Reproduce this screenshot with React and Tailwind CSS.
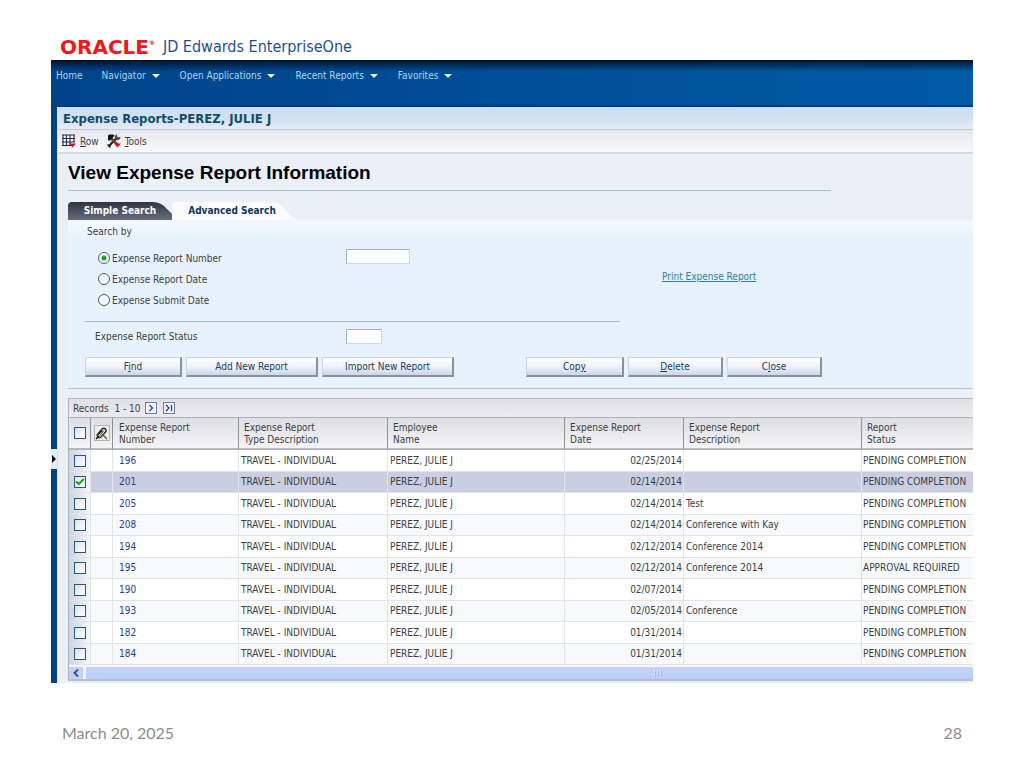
import React, { useState } from "react";
import { Check } from "lucide-react";

const MENUS = ["Navigator", "Open Applications", "Recent Reports", "Favorites"];

const REPORTS = [
  { id: 196, date: "02/25/2014", description: "", status: "PENDING COMPLETION" },
  { id: 201, date: "02/14/2014", description: "", status: "PENDING COMPLETION" },
  { id: 205, date: "02/14/2014", description: "Test", status: "PENDING COMPLETION" },
  { id: 208, date: "02/14/2014", description: "Conference with Kay", status: "PENDING COMPLETION" },
  { id: 194, date: "02/12/2014", description: "Conference 2014", status: "PENDING COMPLETION" },
  { id: 195, date: "02/12/2014", description: "Conference 2014", status: "APPROVAL REQUIRED" },
  { id: 190, date: "02/07/2014", description: "", status: "PENDING COMPLETION" },
  { id: 193, date: "02/05/2014", description: "Conference", status: "PENDING COMPLETION" },
  { id: 182, date: "01/31/2014", description: "", status: "PENDING COMPLETION" },
  { id: 184, date: "01/31/2014", description: "", status: "PENDING COMPLETION" },
];

const SEARCH_FIELDS = ["Expense Report Number", "Expense Report Date", "Expense Submit Date"];

// ─── Icons ───────────────────────────────────────────────────────
function Caret() {
  return (
    <svg width="8" height="4" viewBox="0 0 8 4" className="shrink-0">
      <path d="M0 0h8L4 4z" fill="#e2f4ff" />
    </svg>
  );
}

function RowIcon() {
  return (
    <svg width="14" height="14" viewBox="0 0 14 14">
      <rect x="1" y="1" width="11" height="10" fill="#f2f3fb" />
      <path d="M0 1h13M0 4.500h13M0 8h13M0 11.500h9M1 0.500v11.500M4.500 0.500v11.500M8 0.500v11.500M12 0.500v8" stroke="#2a2a48" strokeWidth="1.100" />
      <path d="M7 9.500h7L10.500 13.500z" fill="#e00f1c" />
    </svg>
  );
}

function ToolsIcon() {
  return (
    <svg width="14" height="14" viewBox="0 0 14 14">
      <path d="M10.500 3L2 12" stroke="#1a1a1a" strokeWidth="2" />
      <path d="M8 2l2-2v2.500l1.500 1 2-1-.5 2.500-3 1.500L8 5z" fill="#454d52" />
      <path d="M3.500 4l8 7.500" stroke="#7a3f22" strokeWidth="2.400" />
      <path d="M1 6V1.500L2.500 0.500H6L8 2 6 3 5.500 5 3.500 5.500 2 7z" fill="#15151c" />
      <path d="M0.500 10.500l3 3" stroke="#111" strokeWidth="1.500" />
      <path d="M7 9.500h7L10.500 13.500z" fill="#e00f1c" />
    </svg>
  );
}

function AttachIcon() {
  return (
    <svg width="13" height="13" viewBox="0 0 13 13" fill="none">
      <path d="M2 8l5-6q2-1.500 3.500 0t0 3L5.500 10.500q-2 1-3-1t.5-2L7.500 3.500" stroke="#222" strokeWidth="1.300" />
      <path d="M4.500 9L9 3.500" stroke="#555" />
      <path d="M1 12l3-3" stroke="#111" strokeWidth="1.500" />
      <path d="M7.500 7.500l4.500 4.500" stroke="#6b6532" strokeWidth="1.500" />
    </svg>
  );
}

// ─── Controls ────────────────────────────────────────────────────
function Tick({ label, checked, onChange }) {
  return (
    <span className="relative mx-auto block h-3 w-3">
      <input type="checkbox" aria-label={label} checked={checked} onChange={onChange}
        className="peer block h-3 w-3 appearance-none border border-[#25588a] bg-linear-to-br from-[#dfe4e4] to-white" />
      <Check size={10} strokeWidth={5}
        className="pointer-events-none absolute top-px left-px hidden text-[#21a121] peer-checked:block" />
    </span>
  );
}

function ActionButton({ className, children }) {
  return (
    <button className={`h-5 border-t border-l border-r-2 border-b-2 border-t-[#cbd4e1] border-l-[#cbd4e1] border-r-[#8791a0] border-b-[#8791a0] bg-linear-to-b from-white via-[#f0f3fb] to-[#cbd5e9] text-center leading-4 text-[#18405f] ${className}`}>
      {children}
    </button>
  );
}

function HeadCell({ top, bottom, className }) {
  return (
    <th className={`border-t border-b-2 border-t-[#b0b4ba] border-r-[#8d9095] border-b-[#b4b7bb] text-left align-top font-normal leading-3 ${className}`}>
      <span className="block pt-1">{top}</span>
      <span className="block">{bottom}</span>
    </th>
  );
}

export default function App() {
  const [searchBy, setSearchBy] = useState(SEARCH_FIELDS[0]);
  const [selected, setSelected] = useState([201]);

  const toggle = (id) =>
    setSelected((ids) => (ids.includes(id) ? ids.filter((x) => x !== id) : [...ids, id]));
  const allSelected = selected.length === REPORTS.length;

  return (
    <div className="bg-white px-[51px] font-['DejaVu_Sans_Condensed','DejaVu_Sans',sans-serif] text-[10px] text-[#3b3f45]">
      {/* brand */}
      <header className="flex h-[60px] items-end gap-2 pb-0.5 pl-[9px]">
        <span className="flex items-start font-['DejaVu_Sans',sans-serif] text-[20px] leading-[22px] font-bold text-[#f01818]">
          ORACLE<span className="pt-1 text-[6px] leading-[6px]">®</span>
        </span>
        <span className="text-[16px] leading-[22px] text-[#1f4f8c]">JD Edwards EnterpriseOne</span>
      </header>

      {/* menu bar */}
      <nav className="h-[47px] border-b-2 border-[#063a76] bg-linear-to-r from-[#00438a] to-[#005aa5]">
        <div className="flex h-full items-start gap-5 bg-linear-to-b from-[#001228] to-transparent to-25% pt-2.5 pl-[5px] leading-3 text-[#a5d8f5]">
          <a href="#home" className="-mr-px">Home</a>
          {MENUS.map((m) => (
            <button key={m} className="flex items-center gap-1.5">
              {m}
              <Caret />
            </button>
          ))}
        </div>
      </nav>

      <div className="flex">
        <div className="flex w-1.5 shrink-0 flex-col bg-[#00437f]">
          <button aria-label="Expand menu" className="mt-[342px] flex h-5 items-center justify-center bg-[#e3ebf5]">
            <svg width="4" height="8" viewBox="0 0 4 8"><path d="M0 0l4 4-4 4z" fill="#111" /></svg>
          </button>
        </div>

        <main className="min-w-0 flex-1 border-l border-[#cfe3f5] bg-[#eaf0f6] pb-0.5">
          <div className="h-[23px] border-b border-[#c3cbd3] bg-linear-to-b from-[#cbdff6] via-[#cfe2f4] to-[#e6ebf4] pl-[5px] text-[13px] leading-[24px] font-bold text-[#164b66]">
            Expense Reports-PEREZ, JULIE J
          </div>
          <div className="flex h-6 items-center gap-2 border-b-2 border-[#d5dade] bg-linear-to-b from-[#e6e7ee] to-[#fafafb] pl-1">
            <button className="flex items-center gap-1"><RowIcon /><span><u>R</u>ow</span></button>
            <button className="flex items-center gap-1"><ToolsIcon /><span><u>T</u>ools</span></button>
          </div>

          <div className="pl-2.5">
            <h1 className="mr-[142px] h-[37px] border-b border-[#a9bfc9] pt-2 font-['Liberation_Sans',sans-serif] text-[19px] leading-[22px] font-bold text-black">
              View Expense Report Information
            </h1>

            {/* tabs */}
            <div className="mt-[11px] flex h-[18px] text-[10px] leading-[18px] font-bold">
              <button className="relative w-[104px] text-white">
                <svg className="absolute inset-0 h-full w-full" viewBox="0 0 104 18" preserveAspectRatio="none">
                  <defs>
                    <linearGradient id="tab" x2="0" y2="1">
                      <stop offset="0" stopColor="#2d3543" />
                      <stop offset="1" stopColor="#666d7d" />
                    </linearGradient>
                  </defs>
                  <path d="M0 18V4Q0 0 4 0H84Q91 0 96 4L104 12V18z" fill="url(#tab)" />
                </svg>
                <span className="relative">Simple Search</span>
              </button>
              <button className="relative w-[124px] pr-1 text-[#11355b]">
                <svg className="absolute inset-0 h-full w-full" viewBox="0 0 124 18" preserveAspectRatio="none">
                  <path d="M0 18V4Q0 0 4 0H98Q106 0 112 6Q119 15 124 18z" fill="#fafcff" />
                </svg>
                <span className="relative">Advanced Search</span>
              </button>
            </div>

            {/* search panel */}
            <section className="border-b border-[#b8c4d0] bg-linear-to-b from-[#f4f9ff] to-[#e7f2fc] to-12% pb-[11px] pl-[17px]">
              <div className="flex items-start">
                <fieldset className="w-[261px] pt-1.5">
                  <legend className="float-left w-full pb-3.5 pl-0.5 leading-3">Search by</legend>
                  <div className="clear-both space-y-[9px] pl-[13px]">
                    {SEARCH_FIELDS.map((f) => (
                      <label key={f} className="flex h-3 items-center gap-0.5">
                        <input type="radio" name="searchBy" checked={searchBy === f} onChange={() => setSearchBy(f)}
                          className="h-3 w-3 appearance-none rounded-full border border-[#456078] bg-[#f6fafc] checked:bg-[radial-gradient(circle,#1e9e28_0_2px,#f6fafc_3px)]" />
                        {f}
                      </label>
                    ))}
                  </div>
                </fieldset>
                <input type="text" aria-label={searchBy}
                  className="mt-[29px] h-[15px] w-16 border border-t-[#a3b1be] border-r-[#ccd8e2] border-b-[#ccd8e2] border-l-[#a3b1be] bg-white" />
                <a href="#print" className="mt-[51px] ml-[252px] leading-3 text-[#2f7ea6] underline">Print Expense Report</a>
              </div>

              <div className="mt-[15px] w-[535px] border-t border-[#a9bccb]" />

              <div className="mt-[7px] flex h-[15px] items-center pl-2.5">
                <label htmlFor="status" className="w-[251px] leading-3">Expense Report Status</label>
                <input id="status" type="text"
                  className="h-[15px] w-9 border border-t-[#a3b1be] border-r-[#ccd8e2] border-b-[#ccd8e2] border-l-[#a3b1be] bg-white" />
              </div>

              <div className="mt-[13px] flex gap-1">
                <ActionButton className="w-[97px]">F<u>i</u>nd</ActionButton>
                <ActionButton className="w-[132px]">Add New Report</ActionButton>
                <ActionButton className="w-[132px]">Import New Report</ActionButton>
                <ActionButton className="ml-[68px] w-[98px]">Cop<u>y</u></ActionButton>
                <ActionButton className="w-[95px]"><u>D</u>elete</ActionButton>
                <ActionButton className="w-[95px]">C<u>l</u>ose</ActionButton>
              </div>
            </section>

            {/* grid */}
            <section className="mt-[9px] border-t border-l border-[#b0b4ba] bg-white">
              <div className="flex h-[18px] items-center gap-1.5 bg-linear-to-b from-[#dfe0e5] to-[#ececf0] pl-1">
                <span className="-mr-0.5 whitespace-pre">Records  1 - 10</span>
                <button aria-label="Next page" className="h-3 w-3 border border-[#6b7fae] bg-[#f1f5fc]">
                  <svg width="10" height="10" viewBox="0 0 10 10" fill="none"><path d="M3.500 2l3 3-3 3" stroke="#26419a" strokeWidth="1.300" /></svg>
                </button>
                <button aria-label="Last page" className="h-3 w-3 border border-[#6b7fae] bg-[#f1f5fc]">
                  <svg width="10" height="10" viewBox="0 0 10 10" fill="none"><path d="M2 2l3 3-3 3M7.500 2v6" stroke="#26419a" strokeWidth="1.300" /></svg>
                </button>
              </div>

              <table className="w-full table-fixed border-separate border-spacing-0">
                <thead>
                  <tr className="h-[33px] bg-linear-to-b from-[#dddee3] to-[#f6f6f7]">
                    <th className="w-[22px] border-t border-r border-b-2 border-t-[#b0b4ba] border-r-[#8d9095] border-b-[#b4b7bb]">
                      <Tick label="Select all" checked={allSelected}
                        onChange={() => setSelected(allSelected ? [] : REPORTS.map((r) => r.id))} />
                    </th>
                    <th className="w-[22px] border-t border-r border-b-2 border-t-[#b0b4ba] border-r-[#8d9095] border-b-[#b4b7bb]">
                      <button aria-label="Attachments" className="mx-auto flex h-4 w-4 items-center justify-center border border-[#b4b4b4] bg-[#eeeeec]"><AttachIcon /></button>
                    </th>
                    <HeadCell top="Expense Report" bottom="Number" className="w-[126px] border-r pl-1.5" />
                    <HeadCell top="Expense Report" bottom="Type Description" className="w-[149px] border-r pl-[5px]" />
                    <HeadCell top="Employee" bottom="Name" className="w-[177px] border-r pl-[5px]" />
                    <HeadCell top="Expense Report" bottom="Date" className="w-[119px] border-r pl-[5px]" />
                    <HeadCell top="Expense Report" bottom="Description" className="w-[178px] border-r pl-[5px]" />
                    <HeadCell top="Report" bottom="Status" className="pl-[5px]" />
                  </tr>
                </thead>
                <tbody className="leading-3 [&_td]:border-b [&_td]:border-[#e1e4e8] [&_td:not(:last-child)]:border-r">
                  {REPORTS.map((r) => {
                    const on = selected.includes(r.id);
                    return (
                      <tr key={r.id} className={`odd:h-[22px] even:h-[21px] ${on ? "bg-[#c9cee0]" : "bg-white even:bg-[#f7f9fa]"}`}>
                        <td className="bg-linear-to-r from-[#ccd4e0] to-[#f5f7fa]">
                          <Tick label={`Select report ${r.id}`} checked={on} onChange={() => toggle(r.id)} />
                        </td>
                        <td />
                        <td className="pl-1.5"><a href={`#report-${r.id}`} className="text-[#253f99]">{r.id}</a></td>
                        <td className="pl-0.5">TRAVEL - INDIVIDUAL</td>
                        <td className="pl-0.5">PEREZ, JULIE J</td>
                        <td className="pr-px text-right">{r.date}</td>
                        <td className="pl-0.5">{r.description}</td>
                        <td className="overflow-hidden pl-px whitespace-nowrap">{r.status}</td>
                      </tr>
                    );
                  })}
                </tbody>
              </table>

              {/* horizontal scroll bar */}
              <div className="flex h-4 gap-[3px] border-b-2 border-[#b3bfcb] bg-[#f6f7f3] pt-0.5">
                <button aria-label="Scroll left" className="flex h-3 w-3.5 items-center justify-center bg-[#c3d1f8]">
                  <svg width="8" height="8" viewBox="0 0 8 8" fill="none"><path d="M6 0.500L2.500 4 6 7.500" stroke="#3d5285" strokeWidth="2" /></svg>
                </button>
                <div className="flex h-3 flex-1 items-center bg-linear-to-b from-[#c4d2fd] to-[#b8d0f9]">
                  <svg width="9" height="6" viewBox="0 0 9 6" className="ml-[64%]">
                    <path d="M0.500 0v5M3.500 0v5M6.500 0v5" stroke="#dce6ff" />
                    <path d="M1.500 1v5M4.500 1v5M7.500 1v5" stroke="#9fb3e4" />
                  </svg>
                </div>
              </div>
            </section>
          </div>
        </main>
      </div>

      <footer className="flex justify-between px-[11px] pt-10 pb-6 font-['Lato',sans-serif] text-[16px] leading-5 text-[#8c8c8c]">
        <span>March 20, 2025</span>
        <span>28</span>
      </footer>
    </div>
  );
}
